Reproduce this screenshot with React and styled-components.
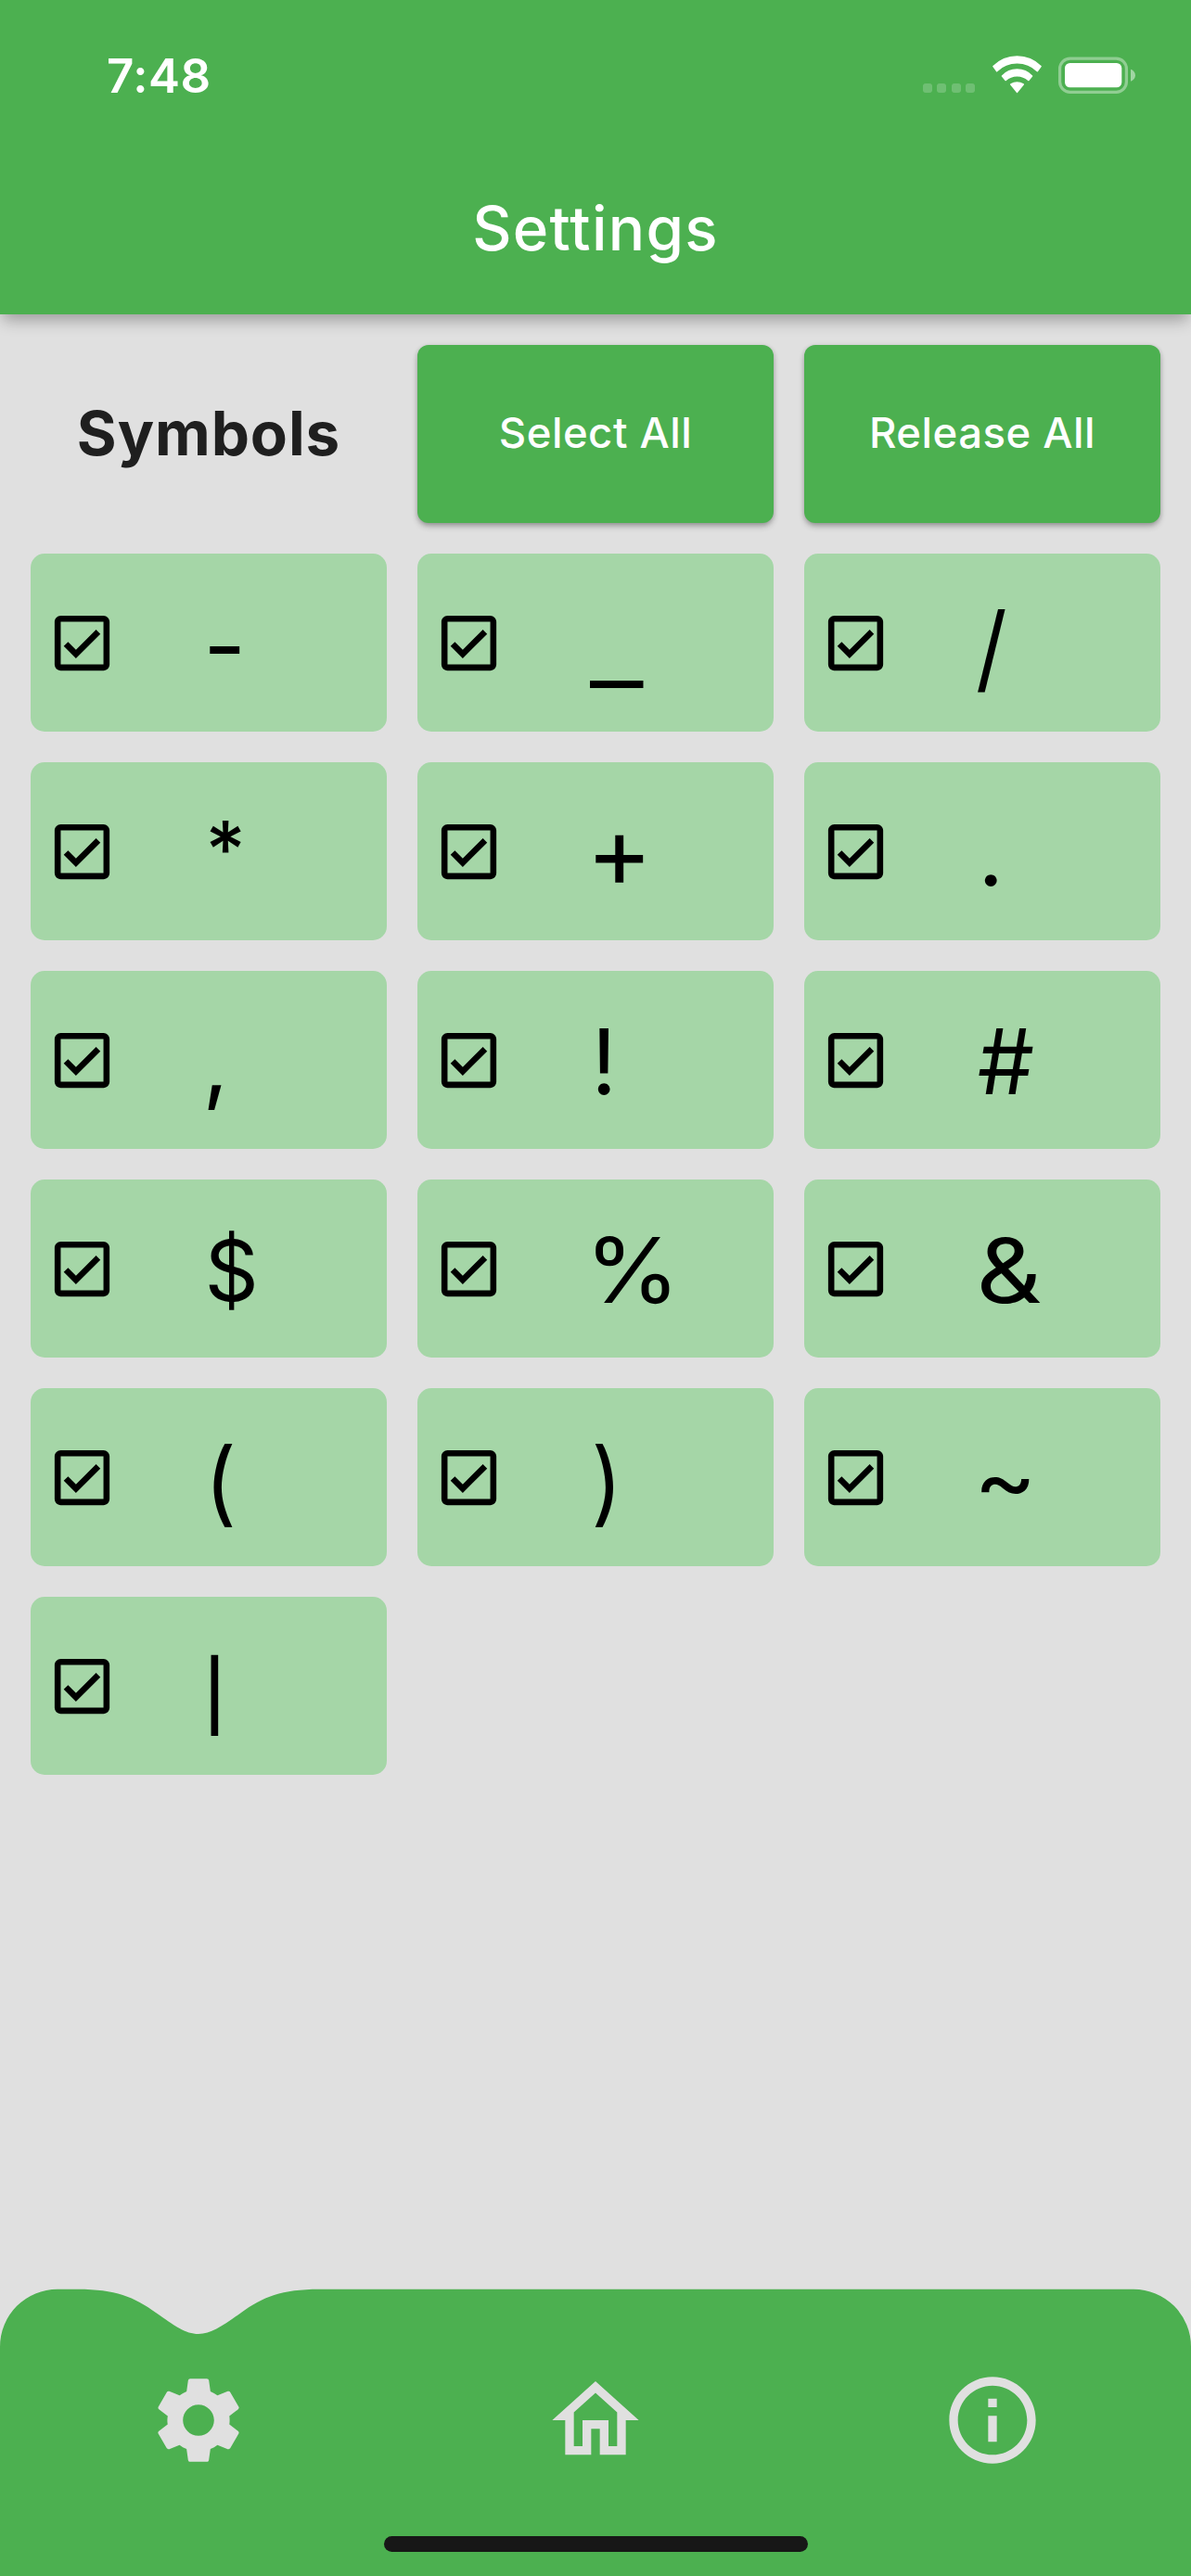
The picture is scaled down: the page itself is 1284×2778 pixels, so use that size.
import React, { useState } from 'react';
import styled, { createGlobalStyle } from 'styled-components';
import { MdSettings, MdInfoOutline } from 'react-icons/md';

const GlobalStyle = createGlobalStyle`
  * { box-sizing: border-box; }
  body { margin: 0; background: #e0e0e0; }
`;

const GREEN = '#4cb050';

const Screen = styled.div`
  display: flex;
  flex-direction: column;
  width: 1284px;
  height: 2778px;
  overflow: hidden;
  background: #e0e0e0;
  font-family: Inter, "Liberation Sans", sans-serif;
`;

const Header = styled.header`
  display: flex;
  flex-direction: column;
  flex: none;
  height: 339px;
  background: ${GREEN};
  color: #fff;
  box-shadow: 0 9px 16px -3px rgba(0, 0, 0, 0.31);
`;

const StatusBar = styled.div`
  display: flex;
  justify-content: space-between;
  align-items: center;
  height: 162px;
  padding: 0 60px 0 115px;
`;

const Clock = styled.span`
  font-size: 51px;
  font-weight: 600;
  letter-spacing: 0.5px;
`;

const StatusIcons = styled.div`
  display: flex;
  align-items: flex-end;
  height: 40px;
`;

const SignalDots = styled.div`
  display: flex;
  gap: 5.4px;
  margin: 0 19px 1px 0;
`;

const SignalDot = styled.span`
  width: 10px;
  height: 10px;
  border-radius: 3px;
  background: rgba(255, 255, 255, 0.2);
`;

const WifiGlyph = styled.svg`
  width: 53px;
  height: 41px;
  margin-right: 18px;
`;

const BatteryGlyph = styled.svg`
  width: 83px;
  height: 40px;
`;

const Title = styled.h1`
  display: flex;
  flex: 1;
  align-items: center;
  justify-content: center;
  margin: 0;
  padding-bottom: 9px;
  font-size: 65.5px;
  font-weight: 500;
  letter-spacing: 1.3px;
`;

const Content = styled.main`
  flex: 1;
  padding: 33px;
`;

const Grid = styled.div`
  display: grid;
  grid-template-columns: repeat(3, 384px);
  grid-auto-rows: 192px;
  gap: 33px;
`;

const SectionTitle = styled.h2`
  display: flex;
  align-items: center;
  justify-content: center;
  margin: 0;
  padding-bottom: 1px;
  color: #1f1f1f;
  font-size: 65.5px;
  font-weight: 700;
  letter-spacing: 0.9px;
`;

const ActionButton = styled.button`
  display: flex;
  align-items: center;
  justify-content: center;
  padding: 0 0 3px;
  border: 0;
  border-radius: 12px;
  background: ${GREEN};
  color: #fff;
  font-family: inherit;
  font-size: 45.5px;
  font-weight: 500;
  letter-spacing: 0.5px;
  box-shadow: 0 4px 7px -1px rgba(0, 0, 0, 0.31), 0 1px 5px rgba(0, 0, 0, 0.12);
`;

const SymbolCard = styled.button`
  display: flex;
  align-items: center;
  padding: 0 0 0 16px;
  border: 0;
  border-radius: 15px;
  background: #a5d6a7;
  color: #000;
  font-family: inherit;
`;

const CheckGlyph = styled.svg`
  flex: none;
  width: 79px;
  height: 79px;
  fill: currentColor;
`;

const SymbolSlot = styled.span`
  padding: 2px 0 0 91px;
  font-size: 97px;
  line-height: 190px;
  white-space: nowrap;
`;

const SymbolMark = styled.span`
  display: inline-block;
  font-size: ${(p) => p.$size}px;
  font-weight: ${(p) => p.$weight};
  line-height: 0;
  transform: translate(${(p) => p.$x}px, ${(p) => p.$y}px) scaleX(${(p) => p.$stretch});
  transform-origin: left center;
`;

const NavBar = styled.footer`
  display: flex;
  flex-direction: column;
  flex: none;
  align-items: center;
  height: 310px;
  padding-top: 86px;
  background: ${GREEN};
  color: #e0e0e0;
  clip-path: path('M0 62.7 A62 62 0 0 1 62 0.7 H84 C124 0.7 145 9 168 26 C188 40 200 49 214 49 C228 49 240 40 260 26 C283 9 304 0.7 344 0.7 H1222 A62 62 0 0 1 1284 62.7 V310 H0 Z');
`;

const NavItems = styled.nav`
  display: grid;
  grid-template-columns: repeat(3, 1fr);
  width: 100%;
`;

const NavItem = styled.button`
  display: flex;
  justify-content: center;
  padding: 0;
  border: 0;
  background: none;
  color: inherit;

  svg {
    width: 112px;
    height: 112px;
    fill: currentColor;
  }
`;

const HomeIndicator = styled.div`
  width: 457px;
  height: 17px;
  margin-top: 69px;
  border-radius: 8.5px;
  background: #171717;
`;

const SYMBOLS = [
  { char: '-', x: 0.2, y: 2, stretch: 1.03 },
  { char: '_', y: 4.5, stretch: 1.3 },
  { char: '/', x: -1.1, y: 6.2, size: 102.6, stretch: 0.91 },
  { char: '*', x: 2.2, y: -8.2, size: 84, weight: 500 },
  { char: '+', x: -3.9, y: 2.5, size: 108 },
  { char: '.', x: 1.2, y: 0.5 },
  { char: ',', x: -0.4, y: 0.5 },
  { char: '!', x: 1.2, y: 0.5 },
  { char: '#', x: 0.7, y: 0.5 },
  { char: '$', x: 1.4, y: -1.5, size: 91 },
  { char: '%', x: -5.5, y: 0.5, stretch: 1.077 },
  { char: '&', x: -0.5, y: 0.5, stretch: 1.13 },
  { char: '(', x: 1.6, y: 3.5, size: 99, stretch: 0.95 },
  { char: ')', x: 1.5, y: 3.5, size: 99, stretch: 0.92 },
  { char: '~', x: -3.2, y: 0.5, stretch: 1.06 },
  { char: '|', x: -4.2, y: 0.6, size: 73, stretch: 1.37 },
];

function WifiIcon() {
  return (
    <WifiGlyph viewBox="0 0 53 41" fill="#fff" stroke="#fff" strokeWidth="1.6" strokeLinejoin="round">
      <path d="M1 11.6 A36 36 0 0 1 52 11.6 L48.4 16.6 A31.4 31.4 0 0 0 4.6 16.6 Z" />
      <path d="M10.5 22 A22 22 0 0 1 42.5 22 L38.8 26.5 A18 18 0 0 0 14.2 26.5 Z" />
      <path d="M19.8 31 A13 13 0 0 1 33.2 31 L26.5 39.3 Z" />
    </WifiGlyph>
  );
}

function BatteryIcon() {
  return (
    <BatteryGlyph viewBox="0 0 83 40">
      <rect x="1.6" y="2.1" width="71.8" height="36.2" rx="11" fill="none" stroke="#fff" strokeOpacity="0.38" strokeWidth="3.2" />
      <rect x="7" y="7" width="61.3" height="26.3" rx="5.5" fill="#fff" />
      <path d="M78 13.7 C84.6 16 84.6 24.4 78 26.7 Z" fill="#fff" fillOpacity="0.48" />
    </BatteryGlyph>
  );
}

function CheckIcon({ checked }) {
  return (
    <CheckGlyph viewBox="0 0 24 24">
      <path d="M19 3H5c-1.1 0-2 .9-2 2v14c0 1.1.9 2 2 2h14c1.1 0 2-.9 2-2V5c0-1.1-.9-2-2-2zm0 16H5V5h14v14z" />
      {checked && <path d="M17.99 9l-1.41-1.42-6.59 6.59-2.58-2.57-1.42 1.41 4 3.99z" />}
    </CheckGlyph>
  );
}

function HomeIcon() {
  return (
    <svg viewBox="0 0 24 24">
      <path d="M12 5.69l5 4.5V18h-2v-6H9v6H7v-7.81l5-4.5M12 3L2 12h3v8h6v-6h2v6h6v-8h3L12 3z" />
    </svg>
  );
}

function SymbolOption({ symbol, checked, onToggle }) {
  const { char, x = 0, y = 0, size = 97, stretch = 1, weight = 400 } = symbol;
  return (
    <SymbolCard type="button" role="checkbox" aria-checked={checked} onClick={onToggle}>
      <CheckIcon checked={checked} />
      <SymbolSlot>
        <SymbolMark $x={x} $y={y} $size={size} $stretch={stretch} $weight={weight}>{char}</SymbolMark>
      </SymbolSlot>
    </SymbolCard>
  );
}

export default function App() {
  const [released, setReleased] = useState([]);
  const toggle = (char) =>
    setReleased((list) => (list.includes(char) ? list.filter((c) => c !== char) : [...list, char]));

  return (
    <Screen>
      <GlobalStyle />
      <Header>
        <StatusBar>
          <Clock>7:48</Clock>
          <StatusIcons>
            <SignalDots>
              <SignalDot />
              <SignalDot />
              <SignalDot />
              <SignalDot />
            </SignalDots>
            <WifiIcon />
            <BatteryIcon />
          </StatusIcons>
        </StatusBar>
        <Title>Settings</Title>
      </Header>
      <Content>
        <Grid>
          <SectionTitle>Symbols</SectionTitle>
          <ActionButton type="button" onClick={() => setReleased([])}>Select All</ActionButton>
          <ActionButton type="button" onClick={() => setReleased(SYMBOLS.map((s) => s.char))}>Release All</ActionButton>
          {SYMBOLS.map((symbol) => (
            <SymbolOption
              key={symbol.char}
              symbol={symbol}
              checked={!released.includes(symbol.char)}
              onToggle={() => toggle(symbol.char)}
            />
          ))}
        </Grid>
      </Content>
      <NavBar>
        <NavItems>
          <NavItem type="button"><MdSettings /></NavItem>
          <NavItem type="button"><HomeIcon /></NavItem>
          <NavItem type="button"><MdInfoOutline /></NavItem>
        </NavItems>
        <HomeIndicator />
      </NavBar>
    </Screen>
  );
}
